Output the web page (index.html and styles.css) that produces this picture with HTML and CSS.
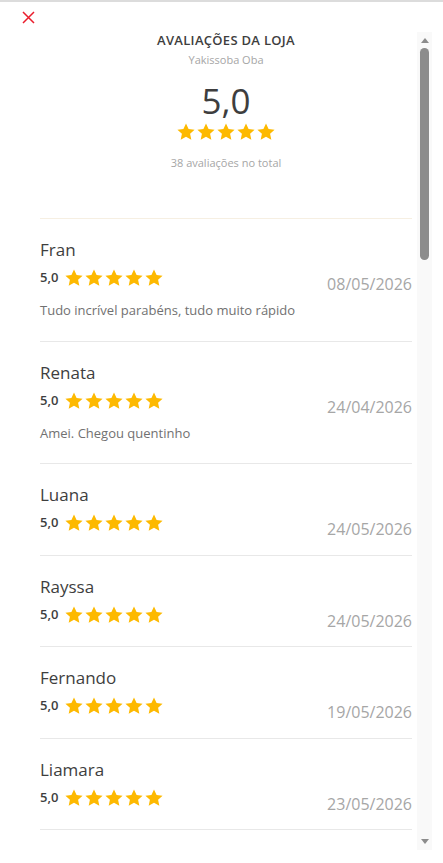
FILE: index.html
```html
<!DOCTYPE html>
<html lang="pt-BR">
  <head>
    <meta charset="UTF-8" />
    <meta name="viewport" content="width=device-width, initial-scale=1.0" />
    <title>Avaliações da loja</title>
    <link rel="stylesheet" href="styles.css">
  </head>
  <body>
    <div class="modal">
      <button class="close" aria-label="Fechar">
        <svg width="13" height="13" viewBox="0 0 13 13">
          <path d="M1 1 L12 12 M12 1 L1 12" stroke="#ea1d2c" stroke-width="1.5" fill="none" />
        </svg>
      </button>

      <div class="body">
        <div class="content">
          <!-- Store summary -->
          <div class="summary">
            <h1>AVALIAÇÕES DA LOJA</h1>
            <p class="store">Yakissoba Oba</p>
            <div class="score">5,0</div>
            <div class="stars big" data-stars></div>
            <p class="total">38 avaliações no total</p>
          </div>

          <ul class="reviews">
            <li class="review">
              <h2>Fran</h2>
              <div class="rating-row">
                <span class="rate">5,0</span>
                <div class="stars" data-stars></div>
                <span class="date">08/05/2026</span>
              </div>
              <p class="comment">Tudo incrível parabéns, tudo muito rápido</p>
            </li>
            <li class="review">
              <h2>Renata</h2>
              <div class="rating-row">
                <span class="rate">5,0</span>
                <div class="stars" data-stars></div>
                <span class="date">24/04/2026</span>
              </div>
              <p class="comment">Amei. Chegou quentinho</p>
            </li>
            <li class="review">
              <h2>Luana</h2>
              <div class="rating-row">
                <span class="rate">5,0</span>
                <div class="stars" data-stars></div>
                <span class="date">24/05/2026</span>
              </div>
            </li>
            <li class="review">
              <h2>Rayssa</h2>
              <div class="rating-row">
                <span class="rate">5,0</span>
                <div class="stars" data-stars></div>
                <span class="date">24/05/2026</span>
              </div>
            </li>
            <li class="review">
              <h2>Fernando</h2>
              <div class="rating-row">
                <span class="rate">5,0</span>
                <div class="stars" data-stars></div>
                <span class="date">19/05/2026</span>
              </div>
            </li>
            <li class="review">
              <h2>Liamara</h2>
              <div class="rating-row">
                <span class="rate">5,0</span>
                <div class="stars" data-stars></div>
                <span class="date">23/05/2026</span>
              </div>
            </li>
          </ul>
        </div>

        <!-- scrollbar look -->
        <div class="scrollbar">
          <span class="arrow up"></span>
          <span class="thumb"></span>
          <span class="arrow down"></span>
        </div>
      </div>
    </div>

    <script>
      // fill every star row with five filled stars
      const star =
        '<svg viewBox="0 0 24 24"><path d="M12 1.8l3.1 6.6 7.2.8-5.4 4.9 1.5 7.1L12 17.6l-6.4 3.6 1.5-7.1L1.7 9.2l7.2-.8z" fill="#fdb900"/></svg>';
      document.querySelectorAll("[data-stars]").forEach((row) => {
        row.innerHTML = star.repeat(5);
      });
    </script>
  </body>
</html>
```

FILE: styles.css
```css
body {
  margin: 0;
  font-family: "Open Sans", "Noto Sans", sans-serif;
  background: #fff;
  color: #3e3e3e;
}

.modal {
  height: 863px;
  border-top: 2px solid #dcdcdc;
  box-sizing: border-box;
  display: flex;
  flex-direction: column;
}

.close {
  background: none;
  border: none;
  padding: 0;
  margin: 9px 0 0 22px;
  width: 13px;
  height: 13px;
  cursor: pointer;
  display: flex;
}

.body {
  flex: 1;
  display: flex;
  min-height: 0;
  margin: 8px 11px 13px 0;
}

.content {
  flex: 1;
  overflow: hidden;
  padding: 0 5px 0 40px;
}

/* Scrollbar */
.scrollbar {
  width: 15px;
  background: #f9f9f9;
  display: flex;
  flex-direction: column;
  align-items: center;
}

.arrow {
  width: 0;
  height: 0;
  border-left: 4px solid transparent;
  border-right: 4px solid transparent;
}

.arrow.up {
  margin-top: 6px;
  border-bottom: 5px solid #8c8c8c;
}

.arrow.down {
  margin: auto 0 6px;
  border-top: 5px solid #8c8c8c;
}

.thumb {
  width: 9px;
  height: 212px;
  margin-top: 5px;
  border-radius: 5px;
  background: #8c8c8c;
}

/* Summary block */
.summary {
  text-align: center;
  padding-bottom: 48px;
  border-bottom: 1px solid #f6efe2;
}

h1 {
  margin: 0;
  font-size: 13px;
  font-weight: 600;
  letter-spacing: 0.3px;
  line-height: 16px;
  color: #3e3e3e;
}

.store {
  margin: 5px 0 0;
  font-size: 11px;
  line-height: 14px;
  color: #a6a6a6;
}

.score {
  margin-top: 16px;
  font-size: 35px;
  line-height: 36px;
  font-weight: 500;
  color: #3e3e3e;
}

.stars {
  display: flex;
}

.stars svg {
  width: 20px;
  height: 20px;
}

.stars.big {
  justify-content: center;
  margin-top: 3px;
}

.total {
  margin: 14px 0 0;
  font-size: 11px;
  line-height: 14px;
  color: #a6a6a6;
}

/* Review list */
.reviews {
  list-style: none;
  margin: 0;
  padding: 0;
}

.review {
  padding: 20px 0 16.5px;
  border-bottom: 1px solid #e8e8e8;
}

h2 {
  margin: 0;
  font-size: 17px;
  font-weight: 400;
  line-height: 22px;
  color: #3e3e3e;
}

.rating-row {
  display: flex;
  align-items: flex-start;
  margin-top: 7px;
}

.rate {
  font-size: 13px;
  font-weight: 600;
  line-height: 18px;
  color: #3e3e3e;
  margin-right: 6px;
}

.stars svg {
  margin-top: 0;
}

.date {
  margin-left: auto;
  padding-top: 7px;
  font-size: 16px;
  line-height: 18px;
  color: #a6a6a6;
}

.comment {
  margin: 8px 0 5px;
  font-size: 13px;
  line-height: 18px;
  color: #717171;
}
```
